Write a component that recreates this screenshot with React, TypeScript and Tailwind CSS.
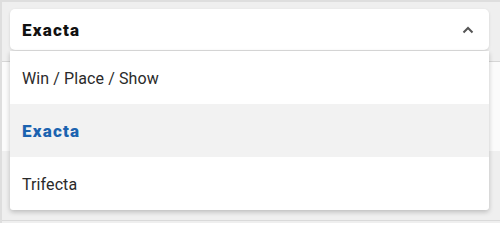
import React from "react";

export default function App() {
  const items = [
    { label: "Win / Place / Show", selected: false },
    { label: "Exacta", selected: true },
    { label: "Trifecta", selected: false },
  ];
  return (
    <div
      className="relative w-[500px] h-[223px] overflow-hidden bg-[#efefef] border-l-2 border-t-2 border-[#dedede]"
      style={{ fontFamily: "Roboto, 'Noto Sans', sans-serif" }}
    >
      <div className="absolute left-0 right-0 top-[59px] h-[90px] bg-[#fbfbfb] border-t border-[#d6d6d6]" />
      <div className="absolute left-0 right-0 bottom-[2px] border-t border-[#dadada]" />
      <div className="relative pt-[7px] pl-[8px] pr-[11px]">
        <div className="h-[41px] bg-white rounded-[5px] shadow-[0_1px_3px_rgba(0,0,0,0.12)] flex items-center justify-between pl-[12px] pr-[14px] pt-[2px]">
          <span className="text-[17px] font-black tracking-[1.2px] text-[#111]">Exacta</span>
          <svg width="12" height="8" viewBox="0 0 12 8" className="mr-[1px] -mt-[2px]">
            <path d="M1.5 6.5 L6 2 L10.5 6.5" fill="none" stroke="#555" strokeWidth="2" />
          </svg>
        </div>
        <div className="mt-[1px] bg-white rounded-b-[3px] shadow-[0_2px_5px_rgba(0,0,0,0.22)] flex flex-col">
          {items.map((it) => (
            <div
              key={it.label}
              className={
                it.selected
                  ? "h-[53px] flex items-center pl-[12px] pt-[3px] bg-[#f2f2f2]"
                  : "h-[53px] flex items-center pl-[12px] pt-[3px]"
              }
            >
              <span
                className={
                  it.selected
                    ? "text-[17px] font-black tracking-[1.2px] text-[#1b63b0]"
                    : "text-[16px] tracking-[0.1px] text-[#2a2a2a]"
                }
              >
                {it.label}
              </span>
            </div>
          ))}
        </div>
      </div>
    </div>
  );
}
